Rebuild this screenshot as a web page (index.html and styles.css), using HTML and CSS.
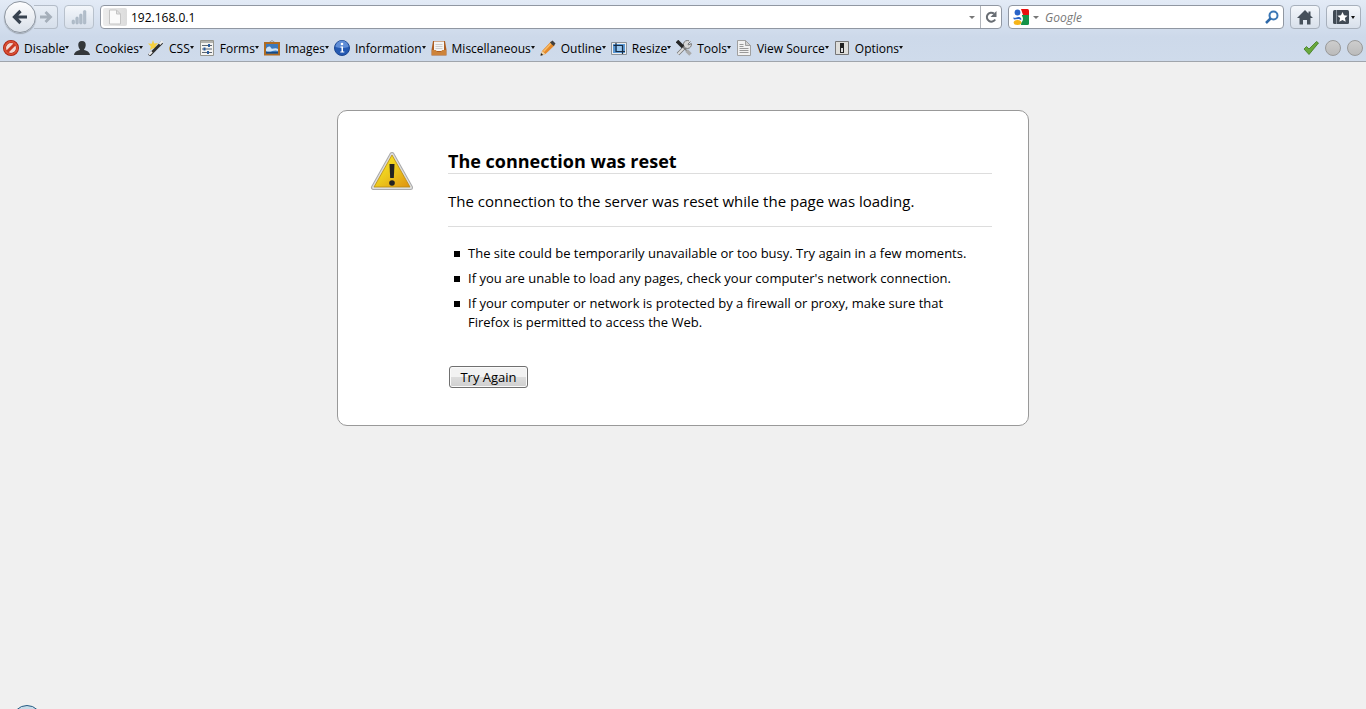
FILE: index.html
```
<!DOCTYPE html>
<html lang="en">
<head>
    <meta charset="UTF-8">
    <meta name="viewport" content="width=device-width, initial-scale=1.0">
    <title>Problem loading page</title>
    <link rel="stylesheet" href="styles.css">
</head>
<body>
    <header class="browser">
        <div class="nav-bar">
            <div class="history">
                <button class="back" aria-label="Back">
                    <svg width="18" height="18" viewBox="0 0 18 18"><path d="M9.500 3 3.500 9l6 6M4 9h12" fill="none" stroke="#384350" stroke-width="3.200"/></svg>
                </button>
                <button class="forward" aria-label="Forward">
                    <svg width="14" height="14" viewBox="0 0 14 14"><path d="M6.500 2 11.500 7l-5 5M11 7H1" fill="none" stroke="#a5afba" stroke-width="2.800"/></svg>
                </button>
            </div>
            <button class="tool-button stats" aria-label="Statistics">
                <svg width="16" height="16" viewBox="0 0 16 16"><g fill="#b2bdc9" stroke="#9faebd" stroke-width=".5"><rect x="1" y="11" width="2.500" height="4" rx="1"/><rect x="4.800" y="8" width="2.500" height="7" rx="1"/><rect x="8.600" y="5" width="2.500" height="10" rx="1"/><rect x="12.400" y="1.500" width="2.500" height="13.500" rx="1"/></g></svg>
            </button>
            <div class="field location">
                <span class="identity">
                    <svg width="14" height="16" viewBox="0 0 14 16"><path d="M1.500 1h7l4 4v10h-11zM8.500 1v4h4" fill="#fafafa" stroke="#c4c4c4"/></svg>
                </span>
                <input type="text" class="address" value="192.168.0.1" aria-label="Address">
                <button class="drop" aria-label="Show history"><span class="caret"></span></button>
                <button class="reload" aria-label="Reload">
                    <svg width="14" height="14" viewBox="0 0 14 14"><path d="M10 3.500A4.500 4.500 0 1 0 11.200 9.500" fill="none" stroke="#686d73" stroke-width="2"/><path d="M12.500 1v6h-6z" fill="#686d73"/></svg>
                </button>
            </div>
            <div class="field search">
                <button class="engine" aria-label="Search engine">
                    <svg width="16" height="16" viewBox="0 0 16 16"><path fill="#fff" d="M0 0h16v16H0z"/><path d="M8 0h6.500A1.500 1.500 0 0 1 16 1.500V6h-6z" fill="#e90e0e"/><path d="M9 6h7v8.500a1.500 1.500 0 0 1-1.500 1.500H8z" fill="#159348"/><path d="M5 5c2 2 3 3 3 5s-2 3-3 3" fill="none" stroke="#fff" stroke-width="4"/><ellipse cx="4.500" cy="3.500" rx="2.900" ry="3" fill="#2863c8"/><path d="M0 8.500c3 1 4-1 6-.5s3 2 2 3l-2-1-5 .5z" fill="#2863c8"/><ellipse cx="4.500" cy="13.500" rx="3.800" ry="2.500" fill="#f6b417"/></svg>
                    <span class="caret"></span>
                </button>
                <input type="text" class="query" placeholder="Google" aria-label="Search">
                <button class="go" aria-label="Search">
                    <svg width="14" height="14" viewBox="0 0 14 14"><circle cx="8.500" cy="5.500" r="4" fill="none" stroke="#3b77b5" stroke-width="2"/><path d="M5.500 8.500 1 13" stroke="#2e69a8" stroke-width="2.500"/></svg>
                </button>
            </div>
            <button class="tool-button home" aria-label="Home">
                <svg width="16" height="16" viewBox="0 0 16 16"><path d="M8 1 0 9h2.500v6.500H6V11h4v4.500h3.500V9H16l-2.500-2.600V2.500h-2v2z" fill="#46505a"/></svg>
            </button>
            <button class="tool-button bookmarks" aria-label="Bookmarks">
                <svg width="16" height="14" viewBox="0 0 16 14"><rect width="16" height="14" rx="1.500" fill="#414a54"/><path d="M3.500 0v14" stroke="#87909a"/><path d="m9.500 2 1.500 3.300 3.600.4-2.700 2.400.8 3.600-3.200-1.800-3.200 1.800.8-3.600-2.700-2.400 3.600-.4z" fill="#fff"/></svg>
                <span class="small-caret"></span>
            </button>
        </div>

        <div class="dev-bar">
            <button class="menu">
                <svg width="16" height="16" viewBox="0 0 16 16"><circle cx="8" cy="8" r="6.500" fill="#f1d8d3" stroke="#a8200f" stroke-width="3"/><path d="m3.500 12.500 9-9" stroke="#c93a22" stroke-width="3"/><circle cx="8" cy="8" r="6.300" fill="none" stroke="#d94f35" stroke-width="1.800"/></svg>
                <span>Disable</span><i class="small-caret"></i>
            </button>
            <button class="menu">
                <svg width="16" height="16" viewBox="0 0 16 16"><path d="M8 1c2.800 0 4 1.800 3.700 4.500-.2 2-1 3-1.700 4 .2 1.300 5.500 1 6 5.500H0c.5-4.500 5.800-4.200 6-5.500-.7-1-1.500-2-1.700-4C4 2.800 5.200 1 8 1z" fill="#33373a"/></svg>
                <span>Cookies</span><i class="small-caret"></i>
            </button>
            <button class="menu">
                <svg width="16" height="16" viewBox="0 0 16 16"><path d="M5 0 6.200 3.500 10 3 7.500 6 9 9.500 5.500 8 2 10l.8-3.800L0 3.500l3.800.2z" fill="#f5cf3f"/><path d="m1 15.500 13-13" stroke="#2d2d2d" stroke-width="3"/><path d="m1 14.800 3-3M11.500 4.300l3-3" stroke="#eee" stroke-width="2"/></svg>
                <span>CSS</span><i class="small-caret"></i>
            </button>
            <button class="menu">
                <svg width="16" height="16" viewBox="0 0 16 16"><path fill="#f4f4f2" stroke="#96968f" d="M1.500.5h13v15h-13z"/><path fill="#b2b2ad" d="M2 1h12v2H2z"/><path d="M3 5.500h10M3 9h10M3 12.500h10" stroke="#5c6672"/><path d="M9 4h2v3H9zM4.500 7.500h2v3h-2zM8 11h2v3H8z" fill="#2a5d9e"/></svg>
                <span>Forms</span><i class="small-caret"></i>
            </button>
            <button class="menu">
                <svg width="16" height="16" viewBox="0 0 16 16"><path d="m4.500 3 3.500-2.500L11.500 3" fill="none" stroke="#999"/><path fill="#3c79bc" stroke="#ae6b22" stroke-width="2" d="M1 3h14v11.500H1z"/><path d="M2 9c2-3 4-3 5-1s4-1 7 1v2c-4-2-7 2-12 0z" fill="#cfe4f7"/><path d="M2 12h12v1.500H2z" fill="#174a82"/></svg>
                <span>Images</span><i class="small-caret"></i>
            </button>
            <button class="menu">
                <svg width="16" height="16" viewBox="0 0 16 16"><circle cx="8" cy="8" r="7.500" fill="#2459b2" stroke="#1c4690"/><path d="M1.500 7a6.500 6.500 0 0 1 13 0c-4 1.500-9 1.500-13 0z" fill="#5f8dd6"/><path d="M6.500 6.500H9v5h1.300v1h-4v-1h1.200v-4h-1z" fill="#fff"/><circle cx="8" cy="4" r="1.300" fill="#fff"/></svg>
                <span>Information</span><i class="small-caret"></i>
            </button>
            <button class="menu">
                <svg width="16" height="16" viewBox="0 0 16 16"><path d="M2 1 .5 10v5.500h15V10L14 1z" fill="#ad5e22"/><path fill="#f4f4f4" d="M3 1.500h10V11H3z"/><path d="M4.500 4.500h7M4.500 6.500h7M4.500 8.500h7" stroke="#ccc"/><path d="M1 10h4l1 2h4l1-2h4v5H1z" fill="#cd833a"/></svg>
                <span>Miscellaneous</span><i class="small-caret"></i>
            </button>
            <button class="menu">
                <svg width="16" height="16" viewBox="0 0 16 16"><path d="M1 15.500 2 11l9-9.500 4 3.500-9.500 9z" fill="#e5892a"/><path d="m3.500 11.500 8.500-9" stroke="#f8bd67" stroke-width="1.500"/><path d="m10 2.500 2.500-2 3 3L13.500 6z" fill="#3f3f3f"/><path d="M2 11 .5 15.800 5.500 14z" fill="#ebd3a8"/><path d="m1 13-.5 2.800L3.200 15z" fill="#222"/></svg>
                <span>Outline</span><i class="small-caret"></i>
            </button>
            <button class="menu">
                <svg width="16" height="16" viewBox="0 0 16 16"><path fill="#eee" stroke="#8b9299" d="M.5 2.500h15v12H.5z"/><path fill="#5b9ad6" d="M2 4h12v9H2z"/><path fill="#9bc8ee" d="M6 6h5v5H6z"/><path d="M5 3v8.500h9M2.500 5.500h9V14" fill="none" stroke="#182c44" stroke-width="1.200"/></svg>
                <span>Resize</span><i class="small-caret"></i>
            </button>
            <button class="menu">
                <svg width="16" height="16" viewBox="0 0 16 16"><path d="m2 14 9-9" stroke="#777" stroke-width="3.500"/><path d="m2 14 9-9" stroke="#dedede" stroke-width="2"/><path d="M14.500 1.500 12 4l.5 1 2.800-1.500A4 4 0 1 1 13 .8" fill="#d6d6d6" stroke="#777"/><path d="m1 1 6 6" stroke="#262626" stroke-width="3.500"/><path d="m7 7 4 4" stroke="#777" stroke-width="1.500"/><path d="m10.500 10.500 4 4" stroke="#aaa" stroke-width="3.500"/></svg>
                <span>Tools</span><i class="small-caret"></i>
            </button>
            <button class="menu">
                <svg width="16" height="16" viewBox="0 0 16 16"><path d="M1.500.5h8l5 5v10h-13z" fill="#f1f1f1" stroke="#a0a0a0"/><path d="M9.500.5v5h5z" fill="#d0d0d0" stroke="#a0a0a0"/><path d="M3.500 4.500h4M3.500 6.500h4M3.500 8.500h9M3.500 10.500h9M3.500 12.500h9" stroke="#999"/></svg>
                <span>View Source</span><i class="small-caret"></i>
            </button>
            <button class="menu">
                <svg width="16" height="16" viewBox="0 0 16 16"><path fill="#dededb" stroke="#777" d="M1.500 1.500h13v13h-13z"/><path fill="#222" d="M6 3h4v10H6z"/><path fill="#ddd" d="M7 8h2v4H7z"/></svg>
                <span>Options</span><i class="small-caret"></i>
            </button>
            <div class="checks">
                <svg width="16" height="16" viewBox="0 0 16 16"><path d="m1 9 2.500-2.500L6 9l7.500-7.500L15.500 3 6 14.500z" fill="#69a83c" stroke="#3e7a1d" stroke-width=".8"/></svg>
                <span class="lamp"></span>
                <span class="lamp"></span>
            </div>
        </div>
    </header>

    <main class="error-page">
        <svg class="warning" width="44" height="40" viewBox="0 0 44 40">
            <defs>
                <linearGradient id="yellow" x1="0" y1="0" x2="1" y2="1"><stop offset="0" stop-color="#fff22e"/><stop offset=".5" stop-color="#ecc91d"/><stop offset="1" stop-color="#df9110"/></linearGradient>
            </defs>
            <path d="M22 3.500 3.500 36.500h37z" fill="#aaa" stroke="#aaa" stroke-width="5" stroke-linejoin="round"/>
            <path d="M22 3.500 3.500 36.500h37z" fill="#ddd" stroke="#dedede" stroke-width="3" stroke-linejoin="round"/>
            <path d="M22 4 4 36h36z" fill="url(#yellow)" stroke="#b88b13" stroke-width=".8" stroke-linejoin="round"/>
            <path d="M19.500 13h5l-.7 14h-3.600z" fill="#222"/>
            <circle cx="22" cy="32" r="2.800" fill="#222"/>
        </svg>
        <div class="message">
            <h1>The connection was reset</h1>
            <p class="summary">The connection to the server was reset while the page was loading.</p>
            <ul>
                <li>The site could be temporarily unavailable or too busy. Try again in a few moments.</li>
                <li>If you are unable to load any pages, check your computer's network connection.</li>
                <li>If your computer or network is protected by a firewall or proxy, make sure that Firefox is permitted to access the Web.</li>
            </ul>
            <button class="try-again">Try Again</button>
        </div>
    </main>
    <div class="status-orb"></div>
</body>
</html>
```
FILE: styles.css
```
* {
    box-sizing: border-box;
}
body {
    margin: 0;
    min-height: 100vh;
    overflow: hidden;
    background-color: #f0f0f0;
    color: #000;
    font-family: "Open Sans", "Noto Sans", sans-serif;
    font-size: 12px;
}
button, input {
    font: inherit;
    color: inherit;
    margin: 0;
    padding: 0;
    border: none;
    background: none;
}
svg {
    display: block;
    flex: none;
}
.browser {
    height: 62px;
    background: linear-gradient(#e3ebf6, #cdd9ea 60%, #cfdbeb);
    border-bottom: 1px solid #a0a5ac;
}
.nav-bar {
    display: flex;
    align-items: center;
    height: 34px;
    padding: 0 5px 0 4px;
}
.history {
    display: flex;
    align-items: center;
    margin-right: 6px;
}
.back {
    display: grid;
    place-items: center;
    width: 32px;
    height: 32px;
    border: 1px solid #8d959f;
    border-radius: 50%;
    background: linear-gradient(#fdfdfe, #d9e0e9);
    box-shadow: 0 1px 1px #9ea6b0;
    z-index: 1;
}
.forward {
    display: grid;
    place-items: center;
    width: 24px;
    height: 24px;
    margin-left: -2px;
    border: 1px solid #b3bcc8;
    border-left: none;
    border-radius: 0 4px 4px 0;
    background: linear-gradient(#e8eef6, #d6dfeb);
}
.tool-button {
    display: flex;
    align-items: center;
    justify-content: center;
    gap: 2px;
    width: 30px;
    height: 24px;
    border: 1px solid #a7b0bc;
    border-radius: 4px;
    background: linear-gradient(#f4f7fb, #d8e0eb);
}
.stats {
    margin-right: 6px;
    border-color: #b8c1cc;
}
.bookmarks {
    width: 35px;
    margin-left: 6px;
}
.field {
    display: flex;
    align-items: center;
    height: 24px;
    border: 1px solid #9097a2;
    border-radius: 4px;
    background-color: #fff;
}
.location {
    flex: 1;
    margin-right: 6px;
}
.identity {
    display: grid;
    place-items: center;
    width: 24px;
    height: 18px;
    margin: 0 4px 0 2px;
    border-radius: 2px;
    background: linear-gradient(90deg, #ececec, #dcdcdc);
}
.address {
    flex: 1;
    min-width: 0;
}
.caret {
    border: 3px solid transparent;
    border-top-color: #777;
    border-bottom: none;
}
.small-caret {
    border: 2px solid transparent;
    border-top: 3px solid #111;
    border-bottom: none;
}
.drop {
    display: grid;
    place-items: center;
    width: 17px;
    height: 22px;
}
.reload {
    display: grid;
    place-items: center;
    width: 21px;
    height: 22px;
    border-left: 1px solid #b0b4ba;
}
.search {
    width: 276px;
    margin-right: 6px;
    padding: 0 4px;
}
.engine {
    display: flex;
    align-items: center;
    gap: 4px;
    margin-right: 6px;
}
.query {
    flex: 1;
    min-width: 0;
    font-style: italic;
}
.query::placeholder {
    color: #777;
    opacity: 1;
}
.dev-bar {
    display: flex;
    align-items: center;
    gap: 5px;
    height: 27px;
    padding: 0 3px;
}
.menu {
    display: flex;
    align-items: center;
    white-space: nowrap;
}
.menu svg {
    margin-right: 5px;
}
.menu span {
    padding-top: 2px;
}
.checks {
    display: flex;
    align-items: center;
    gap: 6px;
    margin-left: auto;
}
.lamp {
    width: 16px;
    height: 16px;
    border: 1px solid #999;
    border-radius: 50%;
    background: linear-gradient(#cdcdcd, #bbb);
}
.error-page {
    display: flex;
    max-width: 692px;
    margin: 48px auto 0;
    padding: 36px 36px 37px 32px;
    border: 1px solid #999;
    border-radius: 10px;
    background-color: #fff;
}
.warning {
    margin: 4px 34px 0 0;
}
.message {
    flex: 1;
}
h1 {
    margin: 0;
    padding-top: 2px;
    border-bottom: 1px solid #ddd;
    font-size: 18px;
    line-height: 24px;
}
.summary {
    margin: 0;
    padding: 15px 0 13px;
    border-bottom: 1px solid #ddd;
    font-size: 15px;
    line-height: 24px;
}
ul {
    margin: 17px 0 34px;
    padding: 0 20px;
    list-style: none;
    font-size: 13px;
    line-height: 19px;
}
li {
    margin-bottom: 6px;
}
li::before {
    content: "";
    display: inline-block;
    width: 6px;
    height: 6px;
    margin: 0 8px 1px -14px;
    background-color: #000;
}
.try-again {
    display: block;
    width: 79px;
    height: 22px;
    margin-left: 1px;
    border: 1px solid #707070;
    border-radius: 3px;
    background: linear-gradient(#f2f2f2 50%, #dddddd 50%, #cfcfcf);
    box-shadow: inset 0 0 0 1px #fafafa;
    font-size: 13px;
    line-height: 20px;
}
.status-orb {
    position: fixed;
    left: 12px;
    bottom: -26px;
    width: 30px;
    height: 30px;
    border: 1px solid #255b82;
    border-radius: 50%;
    background-color: #c7dbe8;
}
```
